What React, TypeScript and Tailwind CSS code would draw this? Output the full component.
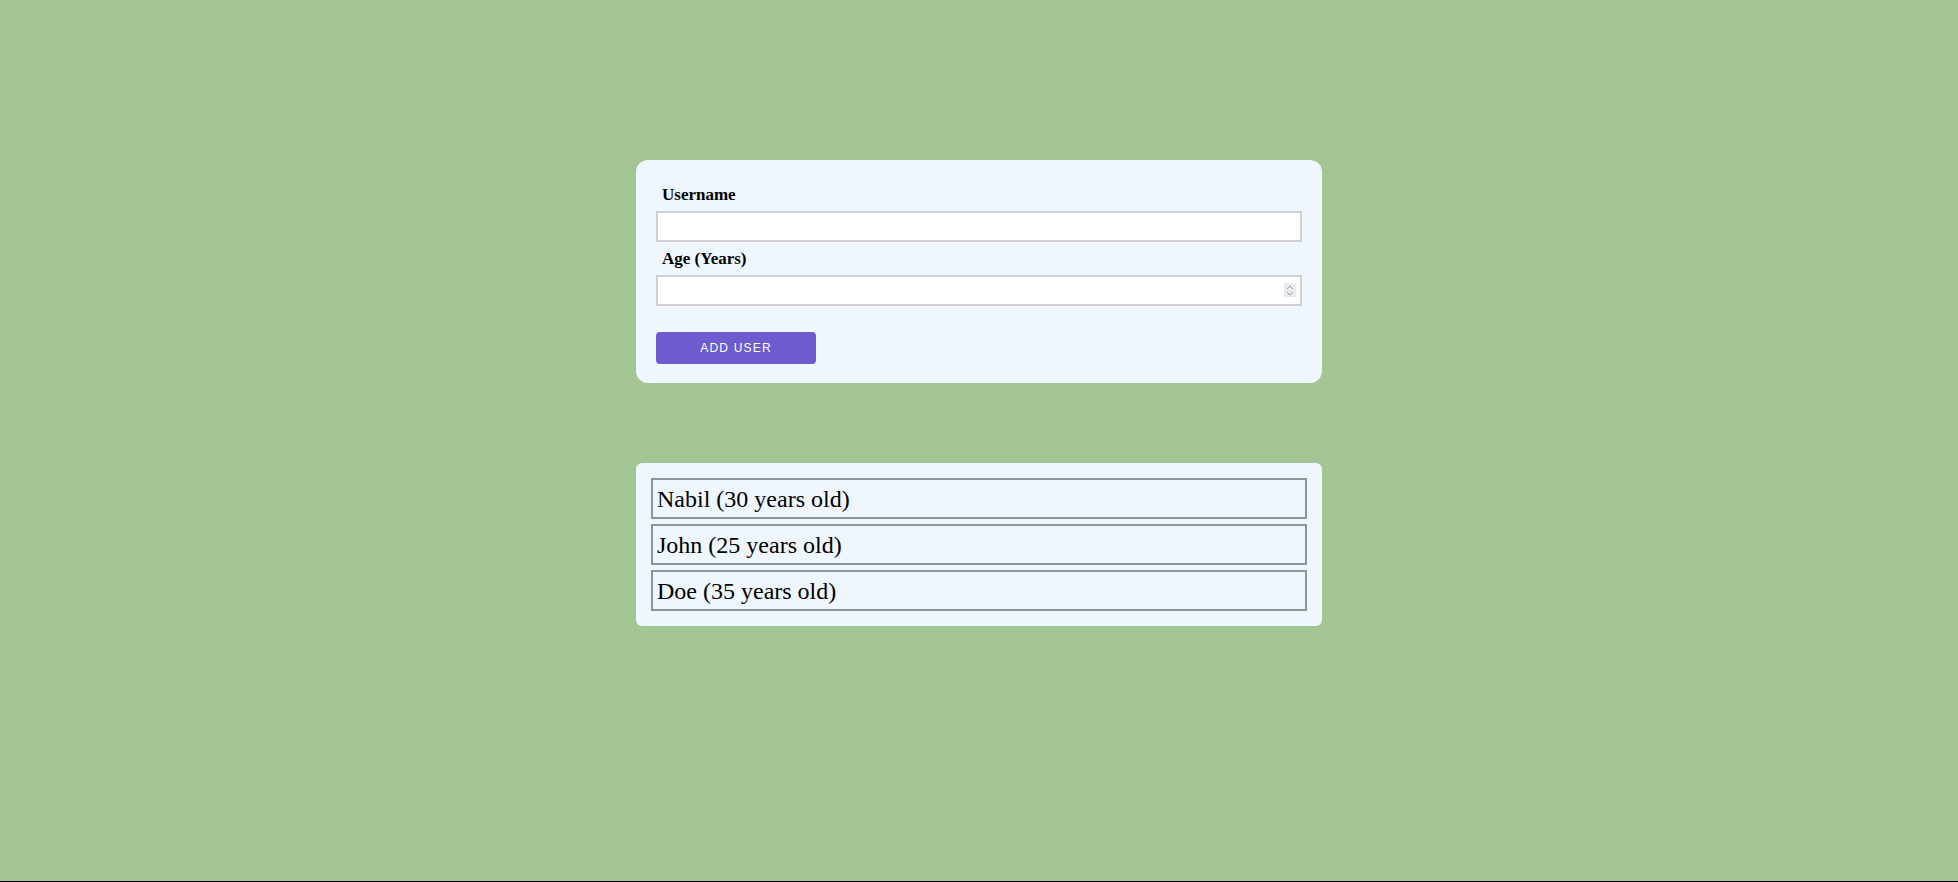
import React, { useState } from "react";

type User = {
    name: string;
    age: number;
};

const initialUsers: User[] = [
    { name: "Nabil", age: 30 },
    { name: "John", age: 25 },
    { name: "Doe", age: 35 },
];

export default function App() {
    const [users, setUsers] = useState<User[]>(initialUsers);
    const [name, setName] = useState("");
    const [age, setAge] = useState("");

    const handleSubmit = (e: React.FormEvent) => {
        e.preventDefault();
        if (!name.trim() || !age) return;
        setUsers((prev) => [...prev, { name, age: Number(age) }]);
        setName("");
        setAge("");
    };

    return (
        <div className="min-h-[882px] bg-[#a3c593] border-b border-black flex flex-col items-center pt-[160px]">
            <form
                onSubmit={handleSubmit}
                className="w-[686px] rounded-xl bg-[#eff6fe] px-5 pt-[26px] pb-[19px] flex flex-col"
            >
                <label className="block pl-[6px] font-bold text-[17px] leading-[18px] mb-[7px] text-black font-['Liberation_Serif',serif]">
                    Username
                </label>
                <input
                    type="text"
                    value={name}
                    onChange={(e) => setName(e.target.value)}
                    className="h-[31px] w-full bg-white border-2 border-[#cfcfcf] mb-[8px] px-1 outline-none"
                />
                <label className="block pl-[6px] font-bold text-[17px] leading-[18px] mb-[7px] text-black font-['Liberation_Serif',serif]">
                    Age (Years)
                </label>
                <div className="relative">
                    <input
                        type="number"
                        value={age}
                        onChange={(e) => setAge(e.target.value)}
                        className="h-[31px] w-full bg-white border-2 border-[#cfcfcf] px-1 outline-none [appearance:textfield] [&::-webkit-inner-spin-button]:appearance-none"
                    />
                    <div className="absolute right-[6px] top-[8px] w-[12px] h-[14px] bg-[#e9e9ef] flex flex-col items-center justify-center gap-[1px] pointer-events-none">
                        <svg width="8" height="5" viewBox="0 0 8 5" fill="none">
                            <path d="M1 4 L4 1 L7 4" stroke="#9a9aa2" strokeWidth="1" />
                        </svg>
                        <svg width="8" height="5" viewBox="0 0 8 5" fill="none">
                            <path d="M1 1 L4 4 L7 1" stroke="#9a9aa2" strokeWidth="1" />
                        </svg>
                    </div>
                </div>
                <button
                    type="submit"
                    className="mt-[26px] h-[32px] w-[160px] rounded-[4px] bg-[#6d5ccf] text-white text-[12px] tracking-[1.2px] font-['Liberation_Sans',sans-serif]"
                >
                    ADD USER
                </button>
            </form>

            <ul className="mt-[80px] w-[686px] rounded-md bg-[#eff6fe] p-[15px] flex flex-col gap-[5px]">
                {users.map((user, index) => (
                    <li
                        key={index}
                        className="h-[41px] border-2 border-[#8c959e] pl-1 flex items-center text-[24px] text-black font-['Liberation_Serif',serif]"
                    >
                        {user.name} ({user.age} years old)
                    </li>
                ))}
            </ul>
        </div>
    );
}
